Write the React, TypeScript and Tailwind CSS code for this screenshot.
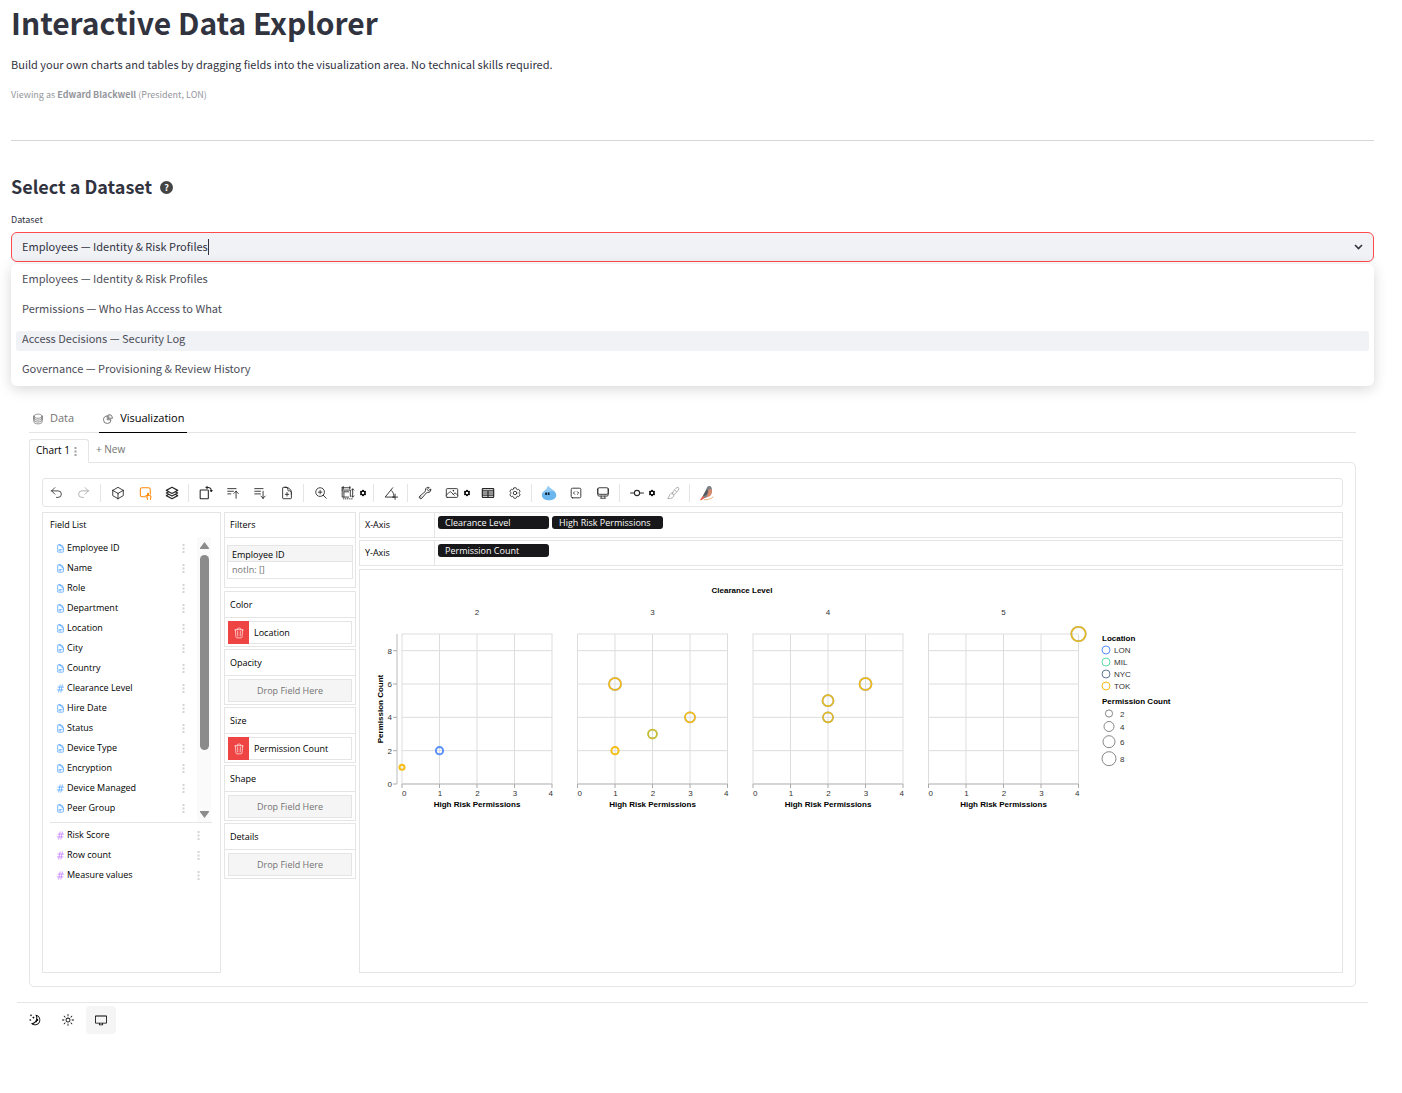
import { useState } from 'react';
import type { ReactNode } from 'react';
import clsx from 'clsx';
import {
  HiCog6Tooth,
  HiOutlineArrowUturnLeft,
  HiOutlineArrowUturnRight,
  HiOutlineBarsArrowDown,
  HiOutlineBarsArrowUp,
  HiOutlineChartPie,
  HiOutlineCircleStack,
  HiOutlineCodeBracketSquare,
  HiOutlineCog6Tooth,
  HiOutlineComputerDesktop,
  HiOutlineCube,
  HiOutlineDocumentPlus,
  HiOutlineDocumentText,
  HiOutlineHashtag,
  HiOutlineMagnifyingGlassPlus,
  HiOutlinePhoto,
  HiOutlineSquare3Stack3D,
  HiOutlineTableCells,
  HiOutlineTrash,
  HiOutlineWrench,
} from 'react-icons/hi2';
import { RxDesktop, RxMoon, RxSun } from 'react-icons/rx';

const DATASETS = [
  'Employees — Identity & Risk Profiles',
  'Permissions — Who Has Access to What',
  'Access Decisions — Security Log',
  'Governance — Provisioning & Review History',
];

type Field = { name: string; numeric?: boolean };

const DIMENSIONS: Field[] = [
  { name: 'Employee ID' },
  { name: 'Name' },
  { name: 'Role' },
  { name: 'Department' },
  { name: 'Location' },
  { name: 'City' },
  { name: 'Country' },
  { name: 'Clearance Level', numeric: true },
  { name: 'Hire Date' },
  { name: 'Status' },
  { name: 'Device Type' },
  { name: 'Encryption' },
  { name: 'Device Managed', numeric: true },
  { name: 'Peer Group' },
];

const MEASURES = ['Risk Score', 'Row count', 'Measure values'];

function DotsIcon({ className }: { className?: string }) {
  return (
    <svg className={clsx('w-[3px] h-[9px]', className)} viewBox="0 0 3 9" fill="currentColor">
      <path d="M.5 0h2v2h-2zM.5 3.5h2v2h-2zM.5 7h2v2h-2z" />
    </svg>
  );
}

// ---------------------------------------------------------------- toolbar

const strokeProps = {
  viewBox: '0 0 24 24',
  fill: 'none',
  stroke: 'currentColor',
  strokeWidth: 1.5,
  strokeLinecap: 'round' as const,
  strokeLinejoin: 'round' as const,
};

function MarkIcon() {
  return (
    <svg className="size-[14px]" {...strokeProps} strokeWidth={1.8}>
      <path d="M12 18.500H7a3 3 0 0 1-3-3V6a3 3 0 0 1 3-3h11a3 3 0 0 1 3 3v8" />
      <path d="M16 23v-2.500l-2.500-2.500c-.8-1.200.8-2.200 1.800-1.300l1 .8v-4c0-1.300 1.700-1.300 1.700 0v2.700l3 .7c1.300.4 1.300 1.300 1 2.500L21.300 23" />
    </svg>
  );
}

function TransposeIcon() {
  return (
    <svg className="size-[14px]" {...strokeProps} strokeWidth={1.8}>
      <rect x="2" y="7" width="14" height="15" rx="1" />
      <path d="M12 2.500h4a5 5 0 0 1 5 5V9M14 1l-2 1.500L14 4M19.500 8 21 9.500 22.500 8" />
    </svg>
  );
}

function ResizeIcon() {
  return (
    <svg className="size-[14px]" {...strokeProps}>
      <path d="M2 2v17h11M2 7h14v11M5 19V10M2 3h14M4 1v4M15 1v4M5 10h8" />
      <path d="M20 5v14M18 7l2-2 2 2M18 17l2 2 2-2" />
      <path d="M4 22h17" strokeDasharray="1 2.500" />
    </svg>
  );
}

function AngleIcon() {
  return (
    <svg className="size-[14px]" {...strokeProps}>
      <path d="M15 3 2 19h16M13 8c3 3 4 6 4 11" />
      <path d="M19 14v9M14.500 19h9" />
    </svg>
  );
}

function CommitIcon() {
  return (
    <svg className="size-[14px]" {...strokeProps} strokeWidth={1.8}>
      <circle cx="12" cy="12" r="4.500" />
      <path d="M1 12h6.500M16.500 12H23" />
    </svg>
  );
}

function BrushIcon() {
  return (
    <svg className="size-[14px]" {...strokeProps}>
      <path d="M11 12.500C13 8 16 4 19 2.500c2-.8 3.500.8 2.800 2.700C20.500 8.500 17.500 12 13.500 14.500c-1.500.8-3.200-.5-2.500-2Z" />
      <path d="M11.500 11.500c-3 .5-5 2.500-6 5.500-.4 1.800-1.500 3-2.500 4.500 3 .5 8-.5 9.500-3 .8-1.300 1-2.700 1-4" />
      <path d="m15.500 7.500 2.500 2.500" />
    </svg>
  );
}

function DropIcon() {
  return (
    <svg className="size-4" viewBox="0 0 16 16">
      <path d="M7 .8c1 2.700 8.300 4.700 8.300 9.200 0 3.500-3.300 5.300-7.300 5.300S.8 13.300.8 10C.8 6 6.500 5.500 7 .8Z" fill="#6cb6f0" />
      <path d="M7 .8c1 2.700 4.500 4 6.500 6C10 5.500 5 7 2 8.500 4 5.500 6.700 4.500 7 .8Z" fill="#93cdf7" />
      <path d="M4.200 7.500H6v2.500H4.200zM6.800 7.500h1.700v2.500H6.800z" fill="#10202e" />
    </svg>
  );
}

function BirdIcon() {
  return (
    <svg className="size-4" viewBox="0 0 16 16">
      <path d="M8 2.500C8.500.6 11.500.2 12.300 2.300c1 1.700 1.200 5.700-1.300 8.200L6 13l-3.500 1L5 9Z" fill="#7b7f86" />
      <path d="M9.500 4.500 12.500 4c.8 3 .3 5.500-1.500 7l-4 1.800C8.500 10 9.300 7.500 9.500 4.500Z" fill="#d98a6c" />
      <path d="M8.500 4.500C6.500 6 5 8.500 3.800 11.500l3.500-1.500C9 8.500 9.200 6.500 8.500 4.500Z" fill="#54585f" />
      <path d="m.8 15.300 3-4.300 1.900 1.500L3 15Z" fill="#e8604c" />
      <path d="M5 14.700c3 .5 6.500-.5 9.500-3" stroke="#e9b487" strokeWidth="1" fill="none" />
    </svg>
  );
}

function ToolButton({ label, className, children }: { label: string; className?: string; children: ReactNode }) {
  return (
    <button
      type="button"
      aria-label={label}
      className={clsx('flex w-[27px] h-full items-center justify-center', className ?? 'text-neutral-800')}
    >
      {children}
    </button>
  );
}

function ToolSettings({ label }: { label: string }) {
  return (
    <button type="button" aria-label={label} className="-ml-0.5 flex w-[11px] h-full items-center justify-start text-black">
      <HiCog6Tooth className="size-2" />
    </button>
  );
}

function ToolDivider() {
  return <div className="mx-[3px] w-px h-[18px] bg-neutral-200" />;
}

function Toolbar() {
  return (
    <div role="toolbar" aria-label="Chart tools" className="flex h-[29px] items-center rounded-[3px] border border-neutral-200">
      <ToolButton label="Undo"><HiOutlineArrowUturnLeft className="size-[13px]" /></ToolButton>
      <ToolButton label="Redo" className="text-neutral-400"><HiOutlineArrowUturnRight className="size-[13px]" /></ToolButton>
      <ToolDivider />
      <ToolButton label="Aggregation"><HiOutlineCube className="size-[14px]" /></ToolButton>
      <ToolButton label="Mark type" className="text-orange-400"><MarkIcon /></ToolButton>
      <ToolButton label="Stack mode"><HiOutlineSquare3Stack3D className="size-[14px] stroke-2" /></ToolButton>
      <ToolDivider />
      <ToolButton label="Transpose"><TransposeIcon /></ToolButton>
      <ToolButton label="Sort ascending"><HiOutlineBarsArrowUp className="size-[14px]" /></ToolButton>
      <ToolButton label="Sort descending"><HiOutlineBarsArrowDown className="size-[14px]" /></ToolButton>
      <ToolButton label="Export"><HiOutlineDocumentPlus className="size-[14px]" /></ToolButton>
      <ToolDivider />
      <ToolButton label="Zoom"><HiOutlineMagnifyingGlassPlus className="size-[14px]" /></ToolButton>
      <ToolButton label="Layout"><ResizeIcon /></ToolButton>
      <ToolSettings label="Layout settings" />
      <ToolDivider />
      <ToolButton label="Coordinates"><AngleIcon /></ToolButton>
      <ToolDivider />
      <ToolButton label="Debug"><HiOutlineWrench className="size-[14px]" /></ToolButton>
      <ToolButton label="Export image"><HiOutlinePhoto className="size-[14px]" /></ToolButton>
      <ToolSettings label="Image settings" />
      <ToolButton label="Table"><HiOutlineTableCells className="size-[14px] stroke-2" /></ToolButton>
      <ToolButton label="Config"><HiOutlineCog6Tooth className="size-[14px]" /></ToolButton>
      <ToolDivider />
      <ToolButton label="Assistant"><DropIcon /></ToolButton>
      <ToolButton label="Export code"><HiOutlineCodeBracketSquare className="size-[14px]" /></ToolButton>
      <ToolButton label="Preview"><HiOutlineComputerDesktop className="size-[14px]" /></ToolButton>
      <ToolDivider />
      <ToolButton label="Limit axis"><CommitIcon /></ToolButton>
      <ToolSettings label="Limit settings" />
      <ToolButton label="Painter" className="text-neutral-400"><BrushIcon /></ToolButton>
      <ToolDivider />
      <ToolButton label="About"><BirdIcon /></ToolButton>
    </div>
  );
}

// ---------------------------------------------------------------- panels

function FieldRow({ name, numeric, measure }: Field & { measure?: boolean }) {
  const Icon = numeric || measure ? HiOutlineHashtag : HiOutlineDocumentText;
  return (
    <li className="flex h-5 items-center gap-0.5 pl-1.5 pr-3">
      <Icon className={clsx('size-[9px] shrink-0 stroke-2', measure ? 'text-purple-400' : 'text-blue-400')} />
      <span className="flex-1 truncate">{name}</span>
      <button type="button" aria-label={`${name} options`} className="text-neutral-300">
        <DotsIcon />
      </button>
    </li>
  );
}

function FieldList() {
  return (
    <section className="w-[179px] shrink-0 border border-neutral-200 pl-[7px] pr-2 pt-1.5">
      <h3 className="leading-3">Field List</h3>
      <div className="mt-1.5 flex border-b border-neutral-200">
        <ul className="flex-1 pt-px pb-1">
          {DIMENSIONS.map((f) => (
            <FieldRow key={f.name} {...f} />
          ))}
        </ul>
        <div className="mr-px flex w-[14px] flex-col items-center bg-neutral-50 pt-[5px] pb-1 text-[#8b8b8b]">
          <svg className="w-[9px] h-[7px]" viewBox="0 0 9 7" fill="currentColor"><path d="M4.500 0 9 6v1H0V6z" /></svg>
          <div className="mt-1.5 h-[195px] w-[9px] rounded-full bg-[#8b8b8b]" />
          <svg className="mt-auto w-[9px] h-[7px]" viewBox="0 0 9 7" fill="currentColor"><path d="M4.500 7 0 1V0h9v1z" /></svg>
        </div>
      </div>
      <ul className="pt-0.5">
        {MEASURES.map((name) => (
          <FieldRow key={name} name={name} measure />
        ))}
      </ul>
    </section>
  );
}

function Shelf({ title, children }: { title: string; children: ReactNode }) {
  return (
    <section className="border border-neutral-200">
      <h3 className="flex h-[26px] items-center border-b border-neutral-200 pl-[5px]">{title}</h3>
      <div className="px-[3px] pt-[3px] pb-0.5">{children}</div>
    </section>
  );
}

function ShelfField({ name }: { name: string }) {
  return (
    <div className="flex h-[23px]">
      <button type="button" aria-label={`Remove ${name}`} className="flex w-[21px] items-center justify-center bg-[#ef4444] text-red-100">
        <HiOutlineTrash className="size-3" />
      </button>
      <div className="flex flex-1 items-center border border-l-0 border-neutral-200 pl-[5px]">{name}</div>
    </div>
  );
}

function DropZone() {
  return (
    <div className="flex h-[23px] items-center justify-center border border-neutral-200 bg-neutral-100 text-neutral-500">
      Drop Field Here
    </div>
  );
}

function Shelves() {
  return (
    <div className="flex w-[132px] shrink-0 flex-col gap-0.5">
      <section className="mb-px border border-neutral-200">
        <h3 className="flex h-[25px] items-center border-b border-neutral-200 pl-[5px]">Filters</h3>
        <div className="px-0.5 pt-[7px] pb-2">
          <div className="border border-neutral-200">
            <div className="flex h-4 items-center border-b border-neutral-200 bg-neutral-100 px-1 pt-0.5">Employee ID</div>
            <div className="flex h-4 items-center px-1 text-neutral-500">notIn: []</div>
          </div>
        </div>
      </section>
      <Shelf title="Color"><ShelfField name="Location" /></Shelf>
      <Shelf title="Opacity"><DropZone /></Shelf>
      <Shelf title="Size"><ShelfField name="Permission Count" /></Shelf>
      <Shelf title="Shape"><DropZone /></Shelf>
      <Shelf title="Details"><DropZone /></Shelf>
    </div>
  );
}

function AxisShelf({ title, fields }: { title: string; fields: string[] }) {
  return (
    <div className="flex h-[26px] border border-neutral-200">
      <div className="flex w-[75px] items-center border-r border-neutral-200 pl-[5px]">{title}</div>
      <div className="flex gap-[3px] px-[3px] pt-[3px]">
        {fields.map((f) => (
          <div key={f} className="flex h-[13px] w-[111px] items-center rounded-[3px] bg-[#18181b] px-[7px] text-neutral-50">
            {f}
          </div>
        ))}
      </div>
    </div>
  );
}

// ---------------------------------------------------------------- chart

const PLOT = 150;
const X_STEP = 37.5;
const Y_STEP = PLOT / 9;

const BLUE = '#5B8FF9';
const GREEN = '#61DDAA';
const SLATE = '#65789B';
const YELLOW = '#F6BD16';

type Point = { x: number; y: number; r: number; color: string; under?: string };

const FACETS: { level: number; points: Point[] }[] = [
  {
    level: 2,
    points: [
      { x: 0, y: 1, r: 2.5, color: YELLOW },
      { x: 1, y: 2, r: 3.6, color: BLUE },
    ],
  },
  {
    level: 3,
    points: [
      { x: 1, y: 6, r: 6, color: YELLOW, under: SLATE },
      { x: 3, y: 4, r: 5, color: YELLOW, under: SLATE },
      { x: 2, y: 3, r: 4.4, color: '#d0b92c', under: GREEN },
      { x: 1, y: 2, r: 3.6, color: YELLOW },
    ],
  },
  {
    level: 4,
    points: [
      { x: 3, y: 6, r: 6, color: YELLOW, under: SLATE },
      { x: 2, y: 5, r: 5.5, color: '#e6bb20', under: SLATE },
      { x: 2, y: 4, r: 5, color: '#e0ba24', under: SLATE },
    ],
  },
  { level: 5, points: [{ x: 4, y: 9, r: 7.2, color: '#e6bb20', under: SLATE }] },
];

const LOCATIONS = [
  { name: 'LON', color: BLUE },
  { name: 'MIL', color: GREEN },
  { name: 'NYC', color: SLATE },
  { name: 'TOK', color: YELLOW },
];

const SIZES = [
  { value: 2, r: 3.6, y: 143.5 },
  { value: 4, r: 5, y: 156.5 },
  { value: 6, r: 6, y: 171.7 },
  { value: 8, r: 7, y: 188.7 },
];

const yPos = (v: number) => PLOT - v * Y_STEP;

function Facet({ index, level, points }: { index: number; level: number; points: Point[] }) {
  return (
    <g transform={`translate(${42 + index * 175.5} 64)`}>
      <text x={75} y={-19} textAnchor="middle" fill="#333">{level}</text>
      <rect width={PLOT} height={PLOT} fill="none" stroke="#ddd" />
      {[1, 2, 3].map((v) => (
        <path key={v} d={`M${v * X_STEP} 0V${PLOT}`} stroke="#ddd" />
      ))}
      {[2, 4, 6, 8].map((v) => (
        <path key={v} d={`M0 ${yPos(v)}H${PLOT}`} stroke="#ddd" />
      ))}
      <path d={`M0 ${PLOT}H${PLOT}`} stroke="#bbb" />
      {[0, 1, 2, 3, 4].map((v) => (
        <g key={v}>
          <path d={`M${v * X_STEP} ${PLOT}v4`} stroke="#aaa" />
          <text
            x={v === 0 ? 0 : v === 4 ? PLOT + 1 : v * X_STEP + 0.5}
            y={162}
            textAnchor={v === 0 ? 'start' : v === 4 ? 'end' : 'middle'}
            fill="#333"
          >
            {v}
          </text>
        </g>
      ))}
      <text x={75} y={173} textAnchor="middle" fontWeight="bold">High Risk Permissions</text>
      {points.map((p) => (
        <g key={`${p.x}-${p.y}`} fill="none">
          {p.under && (
            <circle cx={p.x * X_STEP} cy={yPos(p.y)} r={p.r} stroke={p.under} strokeWidth={1.8} strokeOpacity={0.6} />
          )}
          <circle cx={p.x * X_STEP} cy={yPos(p.y)} r={p.r} stroke={p.color} strokeWidth={p.under ? 1.6 : 2} />
        </g>
      ))}
    </g>
  );
}

function ScatterChart() {
  return (
    <svg
      width={840}
      height={250}
      viewBox="0 0 840 250"
      role="img"
      aria-label="Permission count by high risk permissions"
      className="max-w-full font-['Liberation_Sans',Arial,sans-serif] text-[8px]"
    >
      <text x={382} y={23} textAnchor="middle" fontWeight="bold">Clearance Level</text>
      <text transform="translate(23 139) rotate(-90)" textAnchor="middle" fontWeight="bold">Permission Count</text>
      <path d="M37 64v150" stroke="#bbb" />
      {[0, 2, 4, 6, 8].map((v) => (
        <g key={v}>
          <path d={`M33 ${64 + yPos(v)}h4`} stroke="#aaa" />
          <text x={32} y={67 + yPos(v)} textAnchor="end" fill="#333">{v}</text>
        </g>
      ))}
      {FACETS.map((f, i) => (
        <Facet key={f.level} index={i} {...f} />
      ))}

      <text x={742} y={71} fontWeight="bold">Location</text>
      {LOCATIONS.map((l, i) => (
        <g key={l.name}>
          <circle cx={746} cy={80 + i * 12} r={4} fill="none" stroke={l.color} />
          <text x={754} y={83 + i * 12} fill="#333">{l.name}</text>
        </g>
      ))}
      <text x={742} y={134} fontWeight="bold">Permission Count</text>
      {SIZES.map((s) => (
        <g key={s.value}>
          <circle cx={749} cy={s.y} r={s.r} fill="none" stroke="#888" />
          <text x={760} y={s.y + 3} fill="#333">{s.value}</text>
        </g>
      ))}
    </svg>
  );
}

// ---------------------------------------------------------------- page

function DatasetSelect() {
  const [value, setValue] = useState(DATASETS[0]);
  return (
    <div className="mt-[11px]">
      <label htmlFor="dataset" className="block text-[9px] leading-4">Dataset</label>
      <div className="relative mt-1">
        <div className="flex h-[30px] items-center rounded-md border border-[#ff4b4b] bg-[#f0f2f6] px-2.5">
          <input
            id="dataset"
            role="combobox"
            aria-expanded="true"
            aria-controls="dataset-options"
            value={value}
            onChange={(e) => setValue(e.target.value)}
            className="field-sizing-content bg-transparent pb-0.5 text-[11px] leading-4 outline-none"
          />
          <span className="w-px h-4 bg-[#31333f]" />
          <svg className="ml-auto w-[9px] h-[6px]" viewBox="0 0 9 6" fill="none" stroke="currentColor" strokeWidth="1.600">
            <path d="m1 1 3.500 3.500L8 1" />
          </svg>
        </div>
        <ul
          id="dataset-options"
          role="listbox"
          className="absolute inset-x-0 top-full z-10 mt-0.5 rounded-md bg-white px-[5px] pt-0.5 shadow-[0_3px_14px_rgba(0,0,0,0.16)] text-[11px] text-[#4b4d58]"
        >
          {DATASETS.map((d, i) => (
            <li key={d} role="option" aria-selected={d === value} className="flex h-[30px] items-center">
              <span className={clsx('flex h-5 flex-1 items-center rounded-[3px] px-1.5 pb-1.5', i === 2 && 'bg-[#f0f2f6]')}>
                {d}
              </span>
            </li>
          ))}
        </ul>
      </div>
    </div>
  );
}

function Explorer() {
  return (
    <div className="mx-[18px] mt-[141px] font-['Open_Sans','Noto_Sans',sans-serif] text-[9px] text-black">
      <div role="tablist" className="flex h-[30px] gap-[22px] border-b border-neutral-200 text-[11px]">
        <button type="button" role="tab" aria-selected="false" className="flex items-center gap-1.5 px-[3px] pt-0.5 text-neutral-500">
          <HiOutlineCircleStack className="size-3" />
          Data
        </button>
        <button type="button" role="tab" aria-selected="true" className="-mb-px flex items-center gap-1.5 border-b border-black px-[3px] pt-0.5">
          <HiOutlineChartPie className="size-3 text-neutral-600" />
          Visualization
        </button>
      </div>

      <div className="mt-1.5 flex text-[10px]">
        <button type="button" className="-mb-px flex h-6 w-[60px] items-center gap-1 rounded-t-[3px] border border-b-white border-neutral-200 pb-0.5 pl-1.5">
          Chart 1
          <DotsIcon className="mt-0.5 text-neutral-400" />
        </button>
        <button type="button" className="px-[7px] pb-0.5 text-neutral-500">+ New</button>
      </div>

      <div className="rounded-b-[5px] rounded-tr-[5px] border border-neutral-200 px-3 pt-[15px] pb-[13px]">
        <Toolbar />
        <div className="mt-[5px] flex gap-[3px]">
          <FieldList />
          <Shelves />
          <div className="flex min-w-0 flex-1 flex-col">
            <AxisShelf title="X-Axis" fields={['Clearance Level', 'High Risk Permissions']} />
            <div className="h-0.5" />
            <AxisShelf title="Y-Axis" fields={['Permission Count']} />
            <div className="mt-[3px] h-[404px] border border-neutral-200">
              <ScatterChart />
            </div>
          </div>
        </div>
      </div>
    </div>
  );
}

function ThemeSwitcher() {
  return (
    <div className="mx-1.5 mt-[15px] flex gap-[3px] border-t border-neutral-200 px-[3px] pt-[3px] text-black">
      <button type="button" aria-label="Dark" className="flex h-7 w-[30px] items-center justify-center rounded"><RxMoon className="size-3" /></button>
      <button type="button" aria-label="Light" className="flex h-7 w-[30px] items-center justify-center rounded"><RxSun className="size-3" /></button>
      <button type="button" aria-label="System" className="flex h-7 w-[30px] items-center justify-center rounded bg-neutral-100"><RxDesktop className="size-3" /></button>
    </div>
  );
}

export default function App() {
  return (
    <main className="min-h-screen bg-white pl-[11px] pr-7 pb-10 font-['Noto_Sans_CJK_SC','Noto_Sans',sans-serif] text-[#31333f]">
      <h1 className="text-[30px] leading-[44px] font-bold">Interactive Data Explorer</h1>
      <p className="mt-2.5 text-[11px] leading-5">
        Build your own charts and tables by dragging fields into the visualization area. No technical skills required.
      </p>
      <p className="mt-[13px] text-[9px] leading-4 text-[#95969c]">
        Viewing as <strong>Edward Blackwell</strong> (President, LON)
      </p>
      <hr className="mt-[37px] border-[#d6d6d9]" />
      <h2 className="mt-[30px] flex items-center gap-2 text-[18px] leading-[30px] font-semibold">
        Select a Dataset
        <button type="button" aria-label="Help" className="mt-0.5 flex size-[13px] items-center justify-center rounded-full bg-[#444] text-[9px] leading-none font-bold text-white">
          ?
        </button>
      </h2>
      <DatasetSelect />
      <Explorer />
      <ThemeSwitcher />
    </main>
  );
}
